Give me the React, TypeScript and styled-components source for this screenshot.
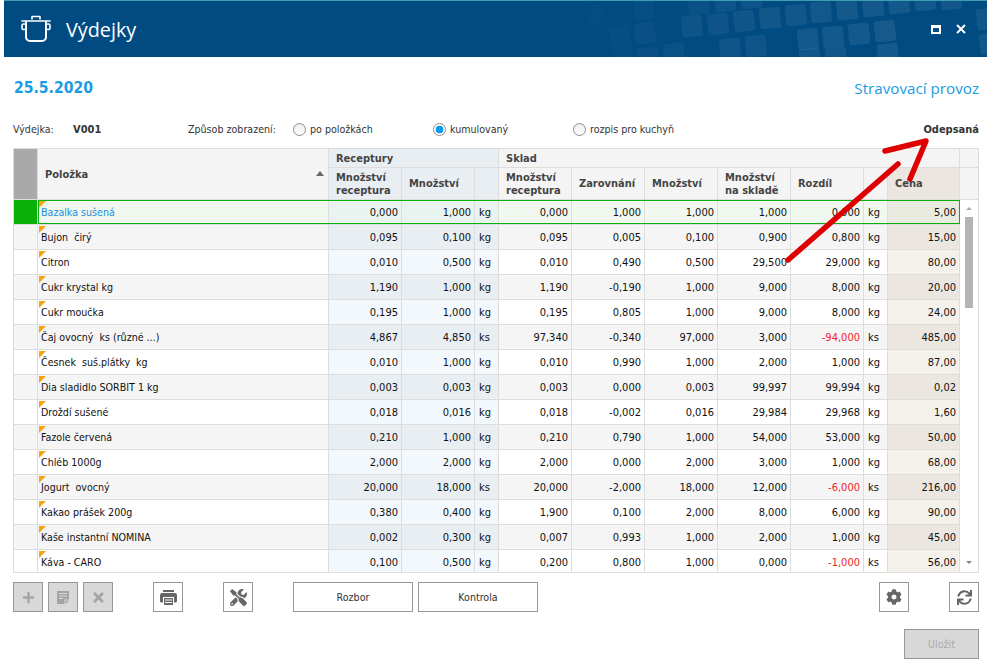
import React from "react";
import styled, { createGlobalStyle } from "styled-components";
import { FaPlus, FaTimes, FaTools, FaCog, FaSync } from "react-icons/fa";

const Global = createGlobalStyle`
  html, body { margin: 0; padding: 0; background: #fff; }
  body { font-family: "DejaVu Sans Condensed", "DejaVu Sans", "Liberation Sans", sans-serif; font-size: 11px; color: #222; }
`;

const Page = styled.div`
  position: relative;
  width: 991px;
  height: 668px;
  overflow: hidden;
  background: #fff;
`;

const Header = styled.header`
  position: relative;
  margin-left: 4px;
  width: 983px;
  height: 57px;
  box-sizing: border-box;
  border-top: 1px solid #3f9db3;
  background: #004b82;
  display: flex;
  align-items: center;
  padding: 0 21px 0 16px;
  overflow: hidden;
`;

const Pattern = styled.svg`
  position: absolute;
  left: 0;
  top: 0;
`;

const Title = styled.h1`
  position: relative;
  margin: 0 0 0 14px;
  font: 400 19.8px "Open Sans", "Noto Sans", sans-serif;
  color: #fff;
  flex: 1;
`;

const WindowControls = styled.div`
  position: relative;
  display: flex;
  gap: 15px;
  align-items: center;
`;

const Main = styled.main`
  padding: 0 12px 0 13px;
`;

const DateRow = styled.div`
  display: flex;
  justify-content: space-between;
  align-items: center;
  height: 22px;
  margin-top: 20px;
  padding-left: 1px;
`;

const DateText = styled.div`
  font: 700 15.6px "DejaVu Sans Condensed", "DejaVu Sans", sans-serif;
  color: #1b9be4;
`;

const Place = styled.div`
  font: 400 15.2px "Open Sans", "Noto Sans", sans-serif;
  color: #1b9be4;
`;

const InfoRow = styled.div`
  display: flex;
  align-items: center;
  height: 18px;
  margin-top: 21px;
  color: #333;
  font-size: 10.6px;
`;

const Label = styled.span<{ $w: number }>`
  width: ${(p) => p.$w}px;
  flex: none;
`;

const Strong = styled.b<{ $w?: number }>`
  font-weight: 700;
  font-size: 11px;
  color: #333;
  ${(p) => (p.$w ? `width: ${p.$w}px; flex: none;` : "")}
`;

const RadioItem = styled.label<{ $w: number }>`
  display: flex;
  align-items: center;
  gap: 4px;
  width: ${(p) => p.$w}px;
  flex: none;
`;

const RadioDot = styled.span<{ $on?: boolean }>`
  width: 13px;
  height: 13px;
  box-sizing: border-box;
  border-radius: 50%;
  border: 1px solid #8e8e8e;
  background: ${(p) =>
    p.$on
      ? "radial-gradient(circle, #0aa0ef 0 3.6px, #fff 4.2px)"
      : "linear-gradient(#eee, #fff)"};
`;

const Spacer = styled.div`
  flex: 1;
`;

const COLS = "24px 291px 73px 73px 24px 73px 73px 73px 73px 73px 24px 72px";

const Table = styled.div`
  margin-top: 10px;
  width: 966px;
  box-sizing: border-box;
  border: 1px solid #ddd;
  border-right: 0;
  position: relative;
`;

const HeadGrid = styled.div`
  display: grid;
  grid-template-columns: ${COLS} 19px;
  grid-template-rows: 19px 32px;
  color: #444;
  font-weight: 700;
`;

const HeadCell = styled.div<{ $bg?: string; $col?: string; $row?: string; $pad?: number }>`
  box-sizing: border-box;
  grid-column: ${(p) => p.$col || "auto"};
  grid-row: ${(p) => p.$row || "auto"};
  background: ${(p) => p.$bg || "#f4f4f4"};
  border-right: 1px solid #ddd;
  border-bottom: 1px solid #ddd;
  padding-left: ${(p) => p.$pad ?? 7}px;
  display: block;
  align-content: center;
  line-height: 13px;
  position: relative;
`;

const SortArrow = styled.span`
  position: absolute;
  right: 4px;
  top: 50%;
  margin-top: -3px;
  border-left: 4px solid transparent;
  border-right: 4px solid transparent;
  border-bottom: 5px solid #666;
`;

const Body = styled.div`
  display: flex;
  height: 372px;
  overflow: hidden;
`;

const Rows = styled.div`
  width: 946px;
  flex: none;
`;

const Row = styled.div<{ $selected?: boolean }>`
  display: grid;
  grid-template-columns: ${COLS};
  height: 25px;
  position: relative;
  ${(p) =>
    p.$selected
      ? `&::after {
          content: "";
          position: absolute;
          left: 24px;
          right: 0;
          top: 0;
          height: 24px;
          box-sizing: border-box;
          border: 1px solid #0cb00c;
          pointer-events: none;
        }`
      : ""}
`;

type Tone = "base" | "rec" | "price" | "status";

const toneBg = (t: Tone, alt: boolean, sel: boolean) => {
  if (sel) {
    if (t === "rec") return "#e9f3ef";
    if (t === "price") return "#e9ebe0";
    if (t === "status") return "#08b008";
    return "#f0f8f0";
  }
  if (t === "rec") return alt ? "#e9eef3" : "#f3f8fc";
  if (t === "price") return alt ? "#ebe7e0" : "#f4f0ea";
  return alt ? "#f5f5f5" : "#fff";
};

const Cell = styled.div<{
  $tone: Tone;
  $alt: boolean;
  $sel: boolean;
  $kind?: "num" | "unit" | "name";
  $color?: string;
}>`
  box-sizing: border-box;
  position: relative;
  background: ${(p) => toneBg(p.$tone, p.$alt, p.$sel)};
  border-right: 1px solid #ddd;
  border-bottom: 1px solid #ddd;
  display: flex;
  align-items: center;
  white-space: pre;
  color: ${(p) => p.$color || "#111"};
  font-size: ${(p) => (p.$kind === "name" ? "10.6px" : "11px")};
  justify-content: ${(p) => (p.$kind === "num" ? "flex-end" : "flex-start")};
  padding: ${(p) =>
    p.$kind === "num" ? "0 3px 0 0" : p.$kind === "unit" ? "0 0 0 4px" : "0 0 0 3px"};
`;

const Corner = styled.span`
  position: absolute;
  left: 1px;
  top: 1px;
  width: 0;
  height: 0;
  border-top: 7px solid #f7a30c;
  border-right: 7px solid transparent;
`;

const ScrollTrack = styled.div`
  width: 19px;
  flex: none;
  box-sizing: border-box;
  border-right: 1px solid #ddd;
  position: relative;
  display: flex;
  flex-direction: column;
  align-items: center;
  background: #fff;
  padding: 7px 1px 0 0;
`;

const ScrollUp = styled.span`
  border-left: 3px solid transparent;
  border-right: 3px solid transparent;
  border-bottom: 3px solid #aaa;
`;

const ScrollDown = styled.span`
  border-left: 3px solid transparent;
  border-right: 3px solid transparent;
  border-top: 3px solid #888;
  margin-top: 253px;
`;

const Thumb = styled.div`
  width: 8px;
  height: 91px;
  margin-top: 7px;
  background: #b4b4b4;
`;

const Toolbar = styled.div`
  display: flex;
  margin-top: 9px;
  align-items: center;
`;

const IconButton = styled.button<{ $disabled?: boolean; $ml?: number }>`
  width: 30px;
  height: 30px;
  box-sizing: border-box;
  border: 1px solid #979797;
  outline: 0;
  padding: 0;
  margin-left: ${(p) => p.$ml ?? 0}px;
  background: ${(p) => (p.$disabled ? "#d8d8d8" : "#fff")};
  color: ${(p) => (p.$disabled ? "#a4a4a4" : "#666")};
  display: flex;
  align-items: center;
  justify-content: center;
`;

const TextButton = styled.button<{ $ml: number }>`
  width: 120px;
  height: 30px;
  box-sizing: border-box;
  border: 1px solid #979797;
  background: #fff;
  margin-left: ${(p) => p.$ml}px;
  font: inherit;
  font-size: 10.6px;
  color: #333;
`;

const Footer = styled.div`
  display: flex;
  justify-content: flex-end;
  margin-top: 17px;
`;

const SaveButton = styled.button`
  width: 75px;
  height: 30px;
  box-sizing: border-box;
  border: 1px solid #979797;
  background: #d8d8d8;
  font: inherit;
  font-size: 10.6px;
  color: #aaa;
`;

const ArrowOverlay = styled.svg`
  position: absolute;
  left: 0;
  top: 0;
  pointer-events: none;
`;

const squares: [number, number, number][] = [
  [596, 14, 0.012], [644, 8, 0.025], [620, 35, 0.02], [645, 32, 0.03],
  [622, 57, 0.02], [648, 57, 0.03], [674, 53, 0.04],
  [692, 25, 0.05], [718, 23, 0.055], [744, 20, 0.06], [770, 17, 0.065], [796, 14, 0.07],
  [821, 11, 0.075], [847, 8, 0.08], [873, 5, 0.08], [899, 2, 0.08], [925, -1, 0.08], [951, -2, 0.07],
  [699, 3, 0.04], [725, 0, 0.05], [751, -3, 0.05],
  [808, 38, 0.075], [833, 36, 0.08], [859, 33, 0.08], [885, 30, 0.085],
  [730, 48, 0.06], [756, 45, 0.06], [810, 58, 0.07], [836, 57, 0.07], [888, 53, 0.08],
  [987, 18, 0.07], [990, 43, 0.07],
];

type RowData = [string, string, string, string, string, string, string, string, string, string, string];

const data: RowData[] = [
  ["Bazalka sušená", "0,000", "1,000", "kg", "0,000", "1,000", "1,000", "1,000", "0,000", "kg", "5,00"],
  ["Bujon  čirý", "0,095", "0,100", "kg", "0,095", "0,005", "0,100", "0,900", "0,800", "kg", "15,00"],
  ["Citron", "0,010", "0,500", "kg", "0,010", "0,490", "0,500", "29,500", "29,000", "kg", "80,00"],
  ["Cukr krystal kg", "1,190", "1,000", "kg", "1,190", "-0,190", "1,000", "9,000", "8,000", "kg", "20,00"],
  ["Cukr moučka", "0,195", "1,000", "kg", "0,195", "0,805", "1,000", "9,000", "8,000", "kg", "24,00"],
  ["Čaj ovocný  ks (různé ...)", "4,867", "4,850", "ks", "97,340", "-0,340", "97,000", "3,000", "-94,000", "ks", "485,00"],
  ["Česnek  suš.plátky  kg", "0,010", "1,000", "kg", "0,010", "0,990", "1,000", "2,000", "1,000", "kg", "87,00"],
  ["Dia sladidlo SORBIT 1 kg", "0,003", "0,003", "kg", "0,003", "0,000", "0,003", "99,997", "99,994", "kg", "0,02"],
  ["Droždí sušené", "0,018", "0,016", "kg", "0,018", "-0,002", "0,016", "29,984", "29,968", "kg", "1,60"],
  ["Fazole červená", "0,210", "1,000", "kg", "0,210", "0,790", "1,000", "54,000", "53,000", "kg", "50,00"],
  ["Chléb 1000g", "2,000", "2,000", "kg", "2,000", "0,000", "2,000", "3,000", "1,000", "kg", "68,00"],
  ["Jogurt  ovocný", "20,000", "18,000", "ks", "20,000", "-2,000", "18,000", "12,000", "-6,000", "ks", "216,00"],
  ["Kakao prášek 200g", "0,380", "0,400", "kg", "1,900", "0,100", "2,000", "8,000", "6,000", "kg", "90,00"],
  ["Kaše instantní NOMINA", "0,002", "0,300", "kg", "0,007", "0,993", "1,000", "2,000", "1,000", "kg", "45,00"],
  ["Káva - CARO", "0,100", "0,500", "kg", "0,200", "0,800", "1,000", "0,000", "-1,000", "ks", "56,00"],
];

const PotIcon = () => (
  <svg width="32" height="32" viewBox="0 0 32 32" fill="none" stroke="#fff" strokeWidth="2" strokeLinecap="round" strokeLinejoin="round">
    <path d="M6 9v15a4 4 0 0 0 4 4h12a4 4 0 0 0 4-4V9" />
    <path d="M2 8h28" strokeWidth="1.6" />
    <path d="M12 6V3.5h8V6" strokeWidth="1.6" />
    <path d="M6 11H3.5a1.5 1.5 0 0 0-1.5 1.5V15a1.5 1.5 0 0 0 1.5 1.5H6" strokeWidth="1.6" />
    <path d="M26 11h2.5a1.5 1.5 0 0 1 1.5 1.5V15a1.5 1.5 0 0 1-1.5 1.5H26" strokeWidth="1.6" />
  </svg>
);

const NoteIcon = () => (
  <svg width="14" height="15" viewBox="0 0 14 15" fill="#a4a4a4">
    <path d="M1 1h12v8.5H8.5V14H1z" />
    <path d="M9.5 10.5H13L9.5 14z" />
    <path d="M3 3.5h8M3 6h8M3 8.5h4" stroke="#d8d8d8" strokeWidth="1" />
  </svg>
);

const PrinterIcon = () => (
  <svg width="17" height="15" viewBox="0 0 17 15" fill="#666">
    <path d="M3 0h11v2H3z" />
    <path fillRule="evenodd" d="M2 3h13a2 2 0 0 1 2 2v6a1.500 1.500 0 0 1-1.500 1.500H14V7H3v5.500H1.500A1.500 1.500 0 0 1 0 11V5a2 2 0 0 1 2-2z" />
    <path d="M4 8h9v7H4z" />
    <path d="M5 10h7M5 12.500h7" stroke="#fff" strokeWidth="1" />
  </svg>
);

export default function App() {
  return (
    <Page>
      <Global />
      <Header>
        <Pattern width="983" height="56" viewBox="0 0 983 56">
          {squares.map(([x, y, o], i) => (
            <rect
              key={i}
              x={x - 4 - 10.5}
              y={y - 10.5}
              width="21"
              height="21"
              rx="3"
              fill="#fff"
              opacity={o}
              transform={`rotate(-6 ${x - 4} ${y})`}
            />
          ))}
        </Pattern>
        <PotIcon />
        <Title>Výdejky</Title>
        <WindowControls>
          <svg width="10" height="9" viewBox="0 0 10 9">
            <path d="M0 0h10v9H0zM2 3v4h6V3z" fill="#fff" fillRule="evenodd" />
          </svg>
          <svg width="10" height="10" viewBox="0 0 10 10">
            <path d="M1 1l8 8M9 1l-8 8" stroke="#fff" strokeWidth="2" />
          </svg>
        </WindowControls>
      </Header>
      <Main>
        <DateRow>
          <DateText>25.5.2020</DateText>
          <Place>Stravovací provoz</Place>
        </DateRow>
        <InfoRow>
          <Label $w={60}>Výdejka:</Label>
          <Strong $w={115}>V001</Strong>
          <Label $w={105}>Způsob zobrazení:</Label>
          <RadioItem $w={140}>
            <RadioDot />
            po položkách
          </RadioItem>
          <RadioItem $w={140}>
            <RadioDot $on />
            kumulovaný
          </RadioItem>
          <RadioItem $w={140}>
            <RadioDot />
            rozpis pro kuchyň
          </RadioItem>
          <Spacer />
          <Strong>Odepsaná</Strong>
        </InfoRow>
        <Table>
          <HeadGrid>
            <HeadCell $bg="#a9a9a9" $row="1 / 3" $col="1" />
            <HeadCell $row="1 / 3" $col="2">
              Položka
              <SortArrow />
            </HeadCell>
            <HeadCell $bg="#e9eef3" $col="3 / 6">Receptury</HeadCell>
            <HeadCell $col="6 / 13">Sklad</HeadCell>
            <HeadCell $col="13" />
            <HeadCell $bg="#e9eef3">Množství<br />receptura</HeadCell>
            <HeadCell $bg="#e9eef3">Množství</HeadCell>
            <HeadCell $bg="#e9eef3" />
            <HeadCell>Množství<br />receptura</HeadCell>
            <HeadCell>Zarovnání</HeadCell>
            <HeadCell>Množství</HeadCell>
            <HeadCell>Množství<br />na skladě</HeadCell>
            <HeadCell>Rozdíl</HeadCell>
            <HeadCell />
            <HeadCell $bg="#ebe6e0">Cena</HeadCell>
            <HeadCell />
          </HeadGrid>
          <Body>
            <Rows>
              {data.map((r, i) => {
                const alt = i % 2 === 1;
                const sel = i === 0;
                const p = { $alt: alt, $sel: sel };
                return (
                  <Row key={i} $selected={sel}>
                    <Cell {...p} $tone="status" />
                    <Cell {...p} $tone="base" $kind="name" $color={sel ? "#1b8fe0" : undefined}>
                      <Corner />
                      {r[0]}
                    </Cell>
                    {r.slice(1, 11).map((v, j) => {
                      const isUnit = j === 2 || j === 8;
                      const tone: Tone = j < 3 ? "rec" : j === 9 ? "price" : "base";
                      return (
                        <Cell
                          key={j}
                          {...p}
                          $tone={tone}
                          $kind={isUnit ? "unit" : "num"}
                          $color={j === 7 && v.startsWith("-") ? "#f01c2c" : undefined}
                        >
                          {v}
                        </Cell>
                      );
                    })}
                  </Row>
                );
              })}
            </Rows>
            <ScrollTrack>
              <ScrollUp />
              <Thumb />
              <ScrollDown />
            </ScrollTrack>
          </Body>
        </Table>
        <Toolbar>
          <IconButton $disabled><FaPlus size={13} /></IconButton>
          <IconButton $disabled $ml={5}><NoteIcon /></IconButton>
          <IconButton $disabled $ml={5}><FaTimes size={15} /></IconButton>
          <IconButton $ml={40}><PrinterIcon /></IconButton>
          <IconButton $ml={40}><FaTools size={17} /></IconButton>
          <TextButton $ml={40}>Rozbor</TextButton>
          <TextButton $ml={5}>Kontrola</TextButton>
          <Spacer />
          <IconButton><FaCog size={16} /></IconButton>
          <IconButton $ml={40}><FaSync size={15} /></IconButton>
        </Toolbar>
        <Footer>
          <SaveButton disabled>Uložit</SaveButton>
        </Footer>
      </Main>
      <ArrowOverlay width="991" height="668" viewBox="0 0 991 668" fill="none" stroke="#de0000" strokeWidth="5.5" strokeLinecap="round" strokeLinejoin="round">
        <path d="M788 260L898 164" />
        <path d="M885 151L926 141L910 179" />
      </ArrowOverlay>
    </Page>
  );
}
